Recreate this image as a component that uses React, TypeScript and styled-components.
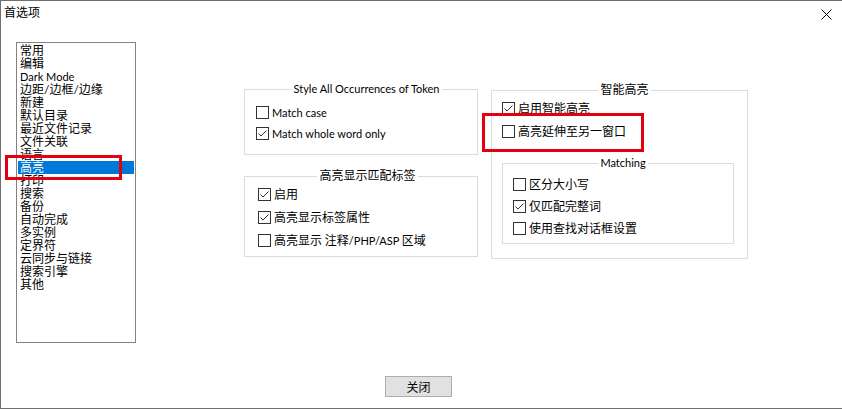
import React from "react";
import styled, { createGlobalStyle } from "styled-components";

const Global = createGlobalStyle`
  html, body { margin: 0; padding: 0; background: #fff; }
  body { font-family: "Lato", "Noto Sans CJK SC", sans-serif; font-size: 12px; color: #000; }
  * { box-sizing: border-box; }
`;

const Window = styled.div`
  position: relative;
  width: 842px;
  height: 409px;
  background: #fff;
  border-top: 1px solid #6f6f6f;
  border-left: 1px solid #6f6f6f;
  border-bottom: 1px solid #6f6f6f;
  display: flex;
  flex-direction: column;
`;

const TitleBar = styled.div`
  height: 30px;
  display: flex;
  justify-content: space-between;
  align-items: flex-start;
  padding: 5px 10px 0 3px;
`;

const Title = styled.div`
  font-size: 12px;
  line-height: 14px;
`;

const CloseX = styled.svg`
  margin-top: 3px;
  display: block;
`;

const Latin = styled.span`
  font-family: "Lato", sans-serif;
  font-size: 11px;
`;

const Body = styled.div`
  display: flex;
  align-items: flex-start;
  padding: 11px 0 0 15px;
`;

const List = styled.div`
  width: 120px;
  height: 301px;
  border: 1px solid #828282;
  padding: 1px;
  display: flex;
  flex-direction: column;
`;

const Item = styled.div<{ $selected?: boolean }>`
  height: 13px;
  line-height: 13px;
  font-size: 12px;
  padding-left: 2px;
  white-space: nowrap;
  background: ${(p) => (p.$selected ? "#0078d7" : "transparent")};
  color: ${(p) => (p.$selected ? "#fff" : "#000")};
`;

const Column = styled.div<{ $ml: number; $mt: number; $w: number }>`
  margin-left: ${(p) => p.$ml}px;
  margin-top: ${(p) => p.$mt}px;
  width: ${(p) => p.$w}px;
  display: flex;
  flex-direction: column;
`;

const Group = styled.fieldset<{ $pt: number; $pb: number; $pl: number; $gap: number; $mt?: number; $ml?: number; $w?: number }>`
  margin: ${(p) => p.$mt ?? 0}px 0 0 ${(p) => p.$ml ?? 0}px;
  min-width: 0;
  width: ${(p) => (p.$w ? `${p.$w}px` : "auto")};
  border: 1px solid #dcdcdc;
  padding: ${(p) => p.$pt}px 0 ${(p) => p.$pb}px ${(p) => p.$pl}px;
  display: flex;
  flex-direction: column;
  gap: ${(p) => p.$gap}px;
`;

const Legend = styled.legend`
  margin: 0 auto;
  padding: 0 2px;
  font-size: 12px;
  line-height: 14px;
`;

const Row = styled.label`
  display: flex;
  align-items: center;
  height: 13px;
  gap: 3px;
  white-space: nowrap;
`;

const Box = styled.span`
  width: 13px;
  height: 13px;
  flex: none;
  border: 1px solid #333;
  background: #fff;
  display: flex;
  align-items: center;
  justify-content: center;
`;

const LabelText = styled.span`
  font-size: 12px;
  line-height: 13px;
`;

const Footer = styled.div`
  margin-top: 33px;
  padding-left: 384px;
`;

const Button = styled.button`
  width: 67px;
  height: 21px;
  background: #e1e1e1;
  border: 1px solid #adadad;
  font-family: "Noto Sans CJK SC", sans-serif;
  font-size: 12px;
  line-height: 17px;
  padding: 0;
  color: #000;
`;

const Annot = styled.div<{ $l: number; $t: number; $w: number; $h: number }>`
  position: absolute;
  left: ${(p) => p.$l}px;
  top: ${(p) => p.$t}px;
  width: ${(p) => p.$w}px;
  height: ${(p) => p.$h}px;
  border: 3px solid #e3000f;
  pointer-events: none;
`;

const Check: React.FC<{ checked?: boolean; children: React.ReactNode }> = ({ checked, children }) => (
  <Row>
    <Box>
      {checked && (
        <svg width="11" height="11" viewBox="0 0 11 11">
          <polyline points="1.5,5.5 4,8 9.5,2.5" fill="none" stroke="#333" strokeWidth="1" />
        </svg>
      )}
    </Box>
    <LabelText>{children}</LabelText>
  </Row>
);

const items: React.ReactNode[] = [
  "常用", "编辑", <Latin>Dark Mode</Latin>, "边距/边框/边缘", "新建", "默认目录", "最近文件记录", "文件关联",
  "语言", "高亮", "打印", "搜索", "备份", "自动完成", "多实例", "定界符", "云同步与链接", "搜索引擎", "其他",
];

export default function App() {
  return (
    <>
      <Global />
      <Window>
        <TitleBar>
          <Title>首选项</Title>
          <CloseX width="11" height="11" viewBox="0 0 11 11">
            <path d="M0.5 0.5 L10.5 10.5 M10.5 0.5 L0.5 10.5" stroke="#000" strokeWidth="1" fill="none" />
          </CloseX>
        </TitleBar>
        <Body>
          <List>
            {items.map((t, i) => (
              <Item key={i} $selected={i === 9}>{t}</Item>
            ))}
          </List>
          <Column $ml={108} $mt={40} $w={234}>
            <Group $pt={10} $pb={14} $pl={11} $gap={8}>
              <Legend><Latin>Style All Occurrences of Token</Latin></Legend>
              <Check><Latin>Match case</Latin></Check>
              <Check checked><Latin>Match whole word only</Latin></Check>
            </Group>
            <Group $pt={5} $pb={9} $pl={13} $gap={10} $mt={14}>
              <Legend>高亮显示匹配标签</Legend>
              <Check checked>启用</Check>
              <Check checked>高亮显示标签属性</Check>
              <Check>高亮显示<Latin> </Latin>注释<Latin>/PHP/ASP </Latin>区域</Check>
            </Group>
          </Column>
          <Column $ml={13} $mt={41} $w={257}>
            <Group $pt={5} $pb={14} $pl={10} $gap={10}>
              <Legend>智能高亮</Legend>
              <Check checked>启用智能高亮</Check>
              <Check>高亮延伸至另一窗口</Check>
              <Group $pt={8} $pb={8} $pl={10} $gap={9} $mt={8} $w={232}>
                <Legend><Latin>Matching</Latin></Legend>
                <Check>区分大小写</Check>
                <Check checked>仅匹配完整词</Check>
                <Check>使用查找对话框设置</Check>
              </Group>
            </Group>
          </Column>
        </Body>
        <Footer>
          <Button>关闭</Button>
        </Footer>
        <Annot $l={4} $t={154} $w={117} $h={25} />
        <Annot $l={481} $t={112} $w={162} $h={39} />
      </Window>
    </>
  );
}
